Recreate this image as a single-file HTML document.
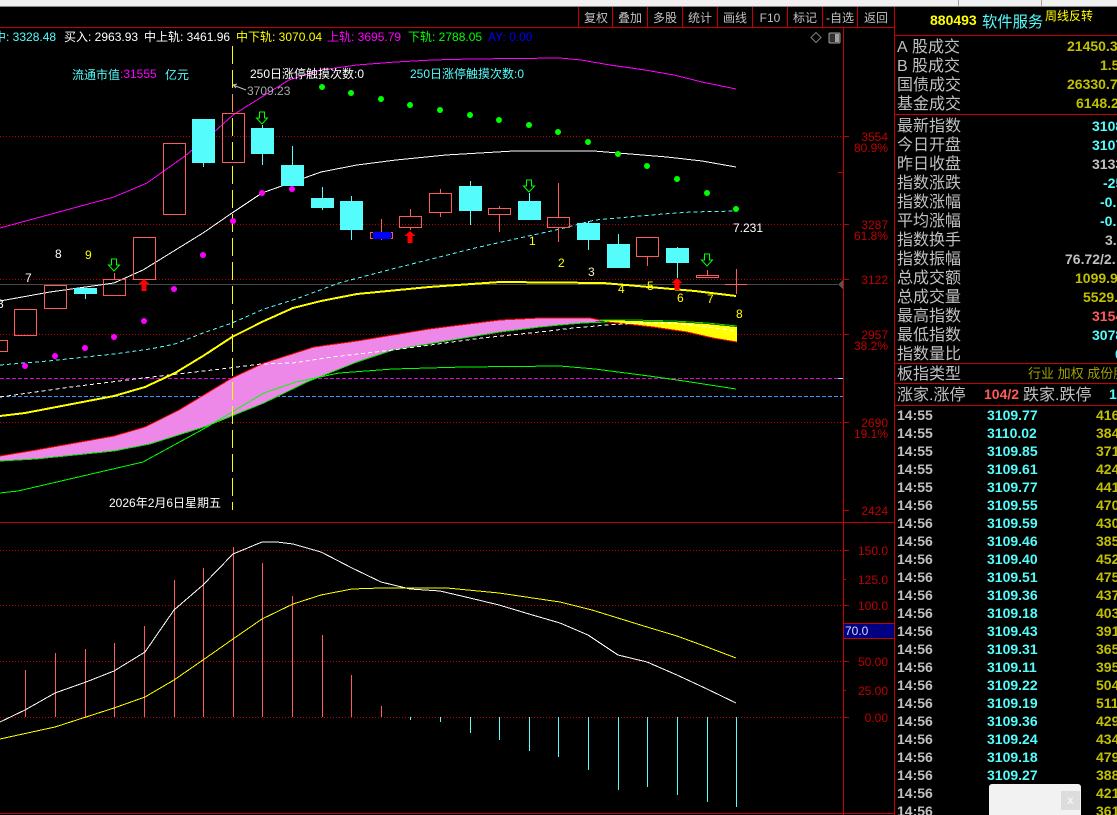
<!DOCTYPE html>
<html lang="zh-CN">
<head>
<meta charset="utf-8">
<title>880493 软件服务</title>
<style>
html,body{margin:0;padding:0;background:#000;width:1117px;height:815px;overflow:hidden}
svg{display:block;position:absolute;left:0;top:0}
text{font-family:"Liberation Sans","WenQuanYi Zen Hei","Noto Sans CJK SC",sans-serif;font-size:12px}
.ax text{fill:#c00000;text-anchor:end}
.lb text{fill:#c0c0c0;font-size:16px}
.v text{font-size:14px;font-weight:bold;fill:#c0c000}
.t text{font-size:14px;font-weight:bold}
.tb text{fill:#c0c0c0;text-anchor:middle}
.h{fill:none;stroke:#ff5a5a;stroke-width:1}
.k{fill:#54fcfc}
.w{stroke:#54fcfc;stroke-width:1}
.r{stroke:#ff5a5a;stroke-width:1}
</style>
</head>
<body>
<svg width="1117" height="815" viewBox="0 0 1117 815" xmlns="http://www.w3.org/2000/svg">
<defs>
<path id="da" d="M-2.5,-6 H2.5 V0 H5.5 L0,6 L-5.5,0 H-2.5 Z" fill="none" stroke="#00ff00" stroke-width="1"/>
<path id="ua" d="M0,-6 L5.5,-1 H2.5 V6 H-2.5 V-1 H-5.5 Z" fill="#ff0000"/>
</defs>
<rect width="1117" height="815" fill="#000"/>
<!-- top window strip -->
<rect width="1117" height="6" fill="#f0f0f0"/>
<rect y="6" width="1117" height="1" fill="#8a8a8a"/>
<rect x="958" width="1" height="6" fill="#a0a0a0"/>
<rect x="1041" width="1" height="6" fill="#a0a0a0"/>

<g shape-rendering="crispEdges">
<!-- frames -->
<path d="M0,27.5H894.5M578.5,7V27M612.5,7V27M647.5,7V27M682.5,7V27M717.5,7V27M752.5,7V27M787.5,7V27M822.5,7V27M857.5,7V27M843.5,27V815M894.5,7V815M0,522.5H894.5M0,813.5H894.5M895,35.5H1117M895,114.5H1117M895,363.5H1117M895,383.5H1117M895,405.5H1117" stroke="#c80000" stroke-width="1" fill="none"/>
<!-- dotted grid main -->
<g stroke="#c00000" stroke-width="1" stroke-dasharray="1 2" fill="none">
<path d="M0,136.5H843M0,224.5H843M0,279.5H843M0,334.5H843M0,422.5H843"/>
<path d="M0,550.5H843M0,605.5H843M0,661.5H843M0,717.5H843"/>
</g>
<path d="M843,136.5H849M843,224.5H849M843,279.5H849M843,334.5H849M843,422.5H849M843,510.5H849M838,172.5H843M843,550.5H849M843,579.5H846M843,605.5H849M843,661.5H849M843,690.5H846M843,717.5H849" stroke="#c00000" fill="none"/>
<path d="M0,284.5H838" stroke="#484848" fill="none"/>
<path d="M838,284.5L843,280V289Z" fill="#555"/>
<path d="M0,378.5H843" stroke="#e000e0" stroke-dasharray="4 2" fill="none"/>
<path d="M0,396.5H843" stroke="#3399ff" stroke-dasharray="4 2" fill="none"/>
<path d="M838,378.5H843" stroke="#54fcfc" fill="none"/>
</g>

<!-- band -->
<g shape-rendering="crispEdges">
<path d="M0,456 L36,450 L114,436 L145,427 L179,410 L232,378 L264,363 L314,347 L357,341 L429,329 L500,320 L540,318 L590,318 L603,321 L583,323 L560,325 L540,327 L500,332 L464,338 L393,350 L357,362 L307,382 L264,403 L207,426 L150,444 L114,451 L36,459 L0,461 Z" fill="#ee88e8"/>
<path d="M600,320 L633,321 L673,322 L707,324 L737,327 L737,342 L713,338 L687,332 L653,327 L627,324 L607,322 Z" fill="#ffff00"/>
<path d="M0,456 L36,450 L114,436 L145,427 L179,410 L232,378 L264,363 L314,347 L357,341 L429,329 L500,320 L540,318 L590,318 L600,320" fill="none" stroke="#ff0000" stroke-width="1"/>
<path d="M607,322 L627,324 L653,327 L687,332 L713,338 L737,342" fill="none" stroke="#ff0000" stroke-width="1"/>
<path d="M0,461 L36,459 L114,451 L150,444 L207,426 L264,403 L307,382 L357,362 L393,350 L464,338 L500,332 L540,327 L560,325 L583,323 L607,322" fill="none" stroke="#00e000" stroke-width="1"/>
<path d="M600,320 L633,320 L673,321 L707,323 L737,326" fill="none" stroke="#00e000" stroke-width="1"/>
</g>

<!-- moving lines -->
<g fill="none" shape-rendering="crispEdges">
<path d="M0,228 L114,197 L147,183 L185,156 L213,133 L233,115 L260,98 L289,80 L321,70 L357,65 L396,62 L432,60 L471,59 L560,58 L581,60 L610,65 L645,70 L674,75 L702,82 L736,89" stroke="#ff00ff"/>
<path d="M0,301 L50,292 L114,283 L143,270 L203,233 L232,213 L262,193 L293,182 L321,172 L357,165 L396,160 L446,155 L514,151 L594,151 L618,153 L667,157 L702,161 L736,167" stroke="#fff"/>
<path d="M0,365 L48,361 L114,354 L150,349 L175,344 L203,333 L232,323 L264,309 L296,299 L339,283 L396,268 L475,248 L560,229 L595,220 L663,214 L691,212 L736,211" stroke="#54fcfc" stroke-dasharray="4 3"/>
<path d="M0,397 L71,387 L143,378 L221,369 L261,364 L293,363 L332,357 L393,350 L482,338 L540,332 L573,328 L607,325 L640,323 L673,323 L707,327 L737,331" stroke="#fff" stroke-dasharray="4 3"/>
<path d="M0,416 L25,413 L114,396 L145,387 L175,373 L203,356 L232,337 L264,321 L293,308 L321,301 L357,294 L429,287 L500,282 L603,283 L649,287 L695,291 L736,296" stroke="#ffff00" stroke-width="2"/>
<path d="M0,493 L18,491 L143,462 L207,427 L232,412 L264,393 L296,382 L339,373 L393,369 L464,367 L560,366 L595,369 L649,376 L684,381 L736,389" stroke="#00ff00"/>
</g>

<!-- date marker -->
<g shape-rendering="crispEdges">
<path d="M232.5,46V510" stroke="#ffff00" stroke-dasharray="18 6" fill="none"/>
<path d="M232.5,94V112" stroke="#ff9040" fill="none"/>
</g>

<!-- candles -->
<g shape-rendering="crispEdges">
<path class="h" d="M-2,340.5H7.5V351.5H-2Z"/>
<rect class="h" x="14.5" y="309.5" width="22" height="26"/>
<rect class="h" x="44.5" y="285.5" width="22" height="23"/>
<path class="w" d="M85.5,294V299"/><rect class="k" x="74" y="288" width="23" height="6"/>
<rect class="h" x="103.5" y="279.5" width="22" height="16"/><path class="r" d="M114.5,273V279"/>
<rect class="h" x="133.5" y="237.5" width="22" height="42"/>
<rect class="h" x="163.5" y="143.5" width="22" height="71"/>
<path class="w" d="M203.5,163V167"/><rect class="k" x="192" y="119" width="23" height="44"/>
<rect class="h" x="222.5" y="113.5" width="22" height="49"/>
<path class="w" d="M262.5,125V165"/><rect class="k" x="251" y="128" width="23" height="26"/>
<path class="w" d="M292.5,146V186"/><rect class="k" x="281" y="165" width="23" height="21"/>
<path class="w" d="M322.5,187V210"/><rect class="k" x="311" y="198" width="23" height="10"/>
<path class="w" d="M351.5,196V240"/><rect class="k" x="340" y="201" width="23" height="29"/>
<path class="r" d="M381.5,219V240"/><rect class="h" x="370.5" y="232.5" width="22" height="6"/><rect x="373" y="232" width="18" height="7" fill="#0000ff"/>
<path class="r" d="M410.5,209V216M410.5,228V230"/><rect class="h" x="399.5" y="216.5" width="22" height="11"/>
<path class="r" d="M440.5,189V193M440.5,213V217"/><rect class="h" x="429.5" y="193.5" width="22" height="19"/>
<path class="w" d="M470.5,181V225"/><rect class="k" x="459" y="186" width="23" height="25"/>
<path class="r" d="M499.5,206V208M499.5,215V232"/><rect class="h" x="488.5" y="208.5" width="22" height="6"/>
<path class="w" d="M529.5,193V201"/><rect class="k" x="518" y="201" width="23" height="19"/>
<path class="r" d="M558.5,183V217M558.5,228V242"/><rect class="h" x="547.5" y="217.5" width="22" height="10"/>
<path class="w" d="M588.5,221V250"/><rect class="k" x="577" y="223" width="23" height="17"/>
<path class="w" d="M618.5,234V268"/><rect class="k" x="607" y="244" width="23" height="24"/>
<path class="r" d="M647.5,257V266"/><rect class="h" x="636.5" y="237.5" width="22" height="19"/>
<path class="w" d="M677.5,247V278"/><rect class="k" x="666" y="248" width="23" height="15"/>
<path class="r" d="M707.5,270V275"/><rect class="h" x="696.5" y="275.5" width="22" height="2"/>
<path class="r" d="M736.5,269V294M725,284.5H747"/>
</g>

<!-- dots -->
<g fill="#00ff00">
<circle cx="322" cy="87" r="3"/><circle cx="351" cy="93" r="3"/><circle cx="381" cy="99" r="3"/><circle cx="410" cy="105" r="3"/><circle cx="440" cy="110" r="3"/><circle cx="470" cy="115" r="3"/><circle cx="499" cy="120" r="3"/><circle cx="529" cy="125" r="3"/><circle cx="558" cy="132" r="3"/><circle cx="588" cy="142" r="3"/><circle cx="618" cy="154" r="3"/><circle cx="647" cy="166" r="3"/><circle cx="677" cy="179" r="3"/><circle cx="707" cy="193" r="3"/><circle cx="736" cy="209" r="3"/>
</g>
<g fill="#ff00ff">
<circle cx="25" cy="366" r="3"/><circle cx="55" cy="356" r="3"/><circle cx="85" cy="348" r="3"/><circle cx="114" cy="337" r="3"/><circle cx="144" cy="321" r="3"/><circle cx="174" cy="289" r="3"/><circle cx="203" cy="255" r="3"/><circle cx="233" cy="221" r="3"/><circle cx="262" cy="193" r="3"/><circle cx="292" cy="189" r="3"/>
</g>
<use href="#da" x="114" y="265"/><use href="#da" x="262" y="118"/><use href="#da" x="529" y="186"/><use href="#da" x="707" y="260"/>
<use href="#ua" x="144" y="285"/><use href="#ua" x="410" y="237"/><use href="#ua" x="677" y="284"/>

<!-- info row -->
<text y="41" x="-6" fill="#54fcfc">中: 3328.48</text>
<text y="41" x="64" fill="#fff">买入: 2963.93</text>
<text y="41" x="144" fill="#fff">中上轨: 3461.96</text>
<text y="41" x="236" fill="#ffff00">中下轨: 3070.04</text>
<text y="41" x="327" fill="#ff00ff">上轨: 3695.79</text>
<text y="41" x="408" fill="#00ff00">下轨: 2788.05</text>
<text y="41" x="488" fill="#0000ff">AY: 0.00</text>

<text x="72" y="79" fill="#54fcfc">流通市值</text><text x="120" y="78" fill="#ff00ff">:31555</text><text x="165" y="79" fill="#54fcfc">亿元</text>
<text x="250" y="78" fill="#fff">250日涨停触摸次数:0</text>
<text x="410" y="78" fill="#54fcfc">250日涨停触摸次数:0</text>
<path d="M233,85 L246,90 M233,85 L237,84 M233,85 L236,88" stroke="#c0c0c0" fill="none"/>
<text x="247" y="95" fill="#a8a8a8">3709.23</text>
<text x="109" y="507" fill="#fff">2026年2月6日星期五</text>

<!-- wave labels -->
<text x="55" y="258" fill="#fff">8</text><text x="85" y="259" fill="#ffff00">9</text><text x="25" y="282" fill="#fff">7</text><text x="-3" y="308" fill="#fff">8</text>
<g fill="#ffff00"><text x="529" y="245">1</text><text x="558" y="267">2</text><text x="618" y="293">4</text><text x="647" y="290">5</text><text x="677" y="302">6</text><text x="707" y="303">7</text><text x="736" y="318">8</text></g>
<text x="588" y="276" fill="#f0f0c0">3</text>
<text x="733" y="232" fill="#fff">7.231</text>

<!-- icons -->
<path d="M816,32.5L821,37.5L816,42.5L811,37.5Z" fill="none" stroke="#808080"/>
<rect x="829" y="33" width="11" height="10" rx="1" fill="#303030" stroke="#a0a0a0"/><rect x="835" y="34" width="4" height="8" fill="#a0a0a0"/>

<!-- toolbar -->
<g class="tb">
<text x="596" y="22">复权</text><text x="630" y="22">叠加</text><text x="665" y="22">多股</text><text x="700" y="22">统计</text><text x="735" y="22">画线</text><text x="770" y="22">F10</text><text x="805" y="22">标记</text><text x="840" y="22">-自选</text><text x="876" y="22">返回</text>
</g>

<!-- price axis -->
<g class="ax">
<text x="888" y="141">3554</text><text x="888" y="152">80.9%</text>
<text x="888" y="229">3287</text><text x="888" y="240">61.8%</text>
<text x="888" y="284">3122</text>
<text x="888" y="339">2957</text><text x="888" y="350">38.2%</text>
<text x="888" y="427">2690</text><text x="888" y="438">19.1%</text>
<text x="888" y="515">2424</text>
<text x="888" y="555">150.0</text><text x="888" y="584">125.0</text><text x="888" y="610">100.0</text><text x="888" y="666">50.00</text><text x="888" y="695">25.00</text><text x="888" y="722">0.00</text>
</g>

<!-- sub chart bars -->
<g shape-rendering="crispEdges" fill="none">
<path d="M25.5,670V717M55.5,653V717M85.5,649V717M114.5,643V717M144.5,626V717M174.5,580V717M203.5,568V717M233.5,547V717M262.5,563V717M292.5,596V717M322.5,635V717M351.5,675V717M381.5,706V717" stroke="#ff5a5a"/>
<path d="M410.5,717V720M440.5,717V722M470.5,717V733M499.5,717V740M529.5,717V751M558.5,717V757M588.5,717V770M618.5,717V790M647.5,717V787M677.5,717V795M707.5,717V802M736.5,717V807" stroke="#54fcfc"/>
<path d="M0,722 L25,710 L55,693 L86,682 L114,671 L145,652 L174,610 L203,585 L233,554 L262,542 L277,542 L293,544 L321,552 L352,568 L381,582 L410,589 L440,591 L470,598 L499,605 L529,614 L560,623 L588,635 L618,655 L647,662 L677,675 L707,689 L736,703" stroke="#fff"/>
<path d="M0,739 L55,727 L86,717 L114,708 L145,697 L174,680 L203,660 L233,639 L262,619 L293,604 L321,595 L352,589 L381,588 L425,588 L447,588 L499,593 L560,602 L592,610 L647,627 L677,636 L707,647 L736,658" stroke="#ffff00"/>
<rect x="844" y="623" width="50" height="16" fill="#000080"/>
<path d="M844,623.5H894M844,638.5H894" stroke="#c80000"/>
</g>
<text x="845" y="635" fill="#d8d8ff">70.0</text>

<!-- right panel head -->
<text x="930" y="25" font-weight="bold" style="font-size:14px" fill="#ffff00">880493</text>
<text x="982" y="27" style="font-size:15.3px" fill="#54fcfc">软件服务</text>
<text x="1045" y="20" fill="#ffff00">周线反转</text>

<g class="lb">
<text x="897" y="52">A</text><text x="912" y="52">股成交</text>
<text x="897" y="71">B</text><text x="912" y="71">股成交</text>
<text x="897" y="90">国债成交</text>
<text x="897" y="109">基金成交</text>
<text x="897" y="131">最新指数</text>
<text x="897" y="150">今日开盘</text>
<text x="897" y="169">昨日收盘</text>
<text x="897" y="188">指数涨跌</text>
<text x="897" y="207">指数涨幅</text>
<text x="897" y="226">平均涨幅</text>
<text x="897" y="245">指数换手</text>
<text x="897" y="264">指数振幅</text>
<text x="897" y="283">总成交额</text>
<text x="897" y="302">总成交量</text>
<text x="897" y="321">最高指数</text>
<text x="897" y="340">最低指数</text>
<text x="897" y="359">指数量比</text>
<text x="897" y="379">板指类型</text>
<text x="897" y="400">涨家.涨停</text>
<text x="1023" y="400">跌家.跌停</text>
</g>

<g class="v">
<text x="1067" y="51">21450.3</text>
<text x="1100" y="70">1.5</text>
<text x="1067" y="89">26330.7</text>
<text x="1076" y="108">6148.2</text>
<text x="1092" y="131" style="fill:#54fcfc">3108</text>
<text x="1092" y="150" style="fill:#54fcfc">3107</text>
<text x="1092" y="169" style="fill:#c0c0c0">3133</text>
<text x="1103" y="188" style="fill:#54fcfc">-25</text>
<text x="1100" y="207" style="fill:#54fcfc">-0.</text>
<text x="1100" y="226" style="fill:#54fcfc">-0.</text>
<text x="1105" y="245" style="fill:#c0c0c0">3.</text>
<text x="1065" y="264" style="fill:#c0c0c0">76.72/2.</text>
<text x="1075" y="283">1099.9</text>
<text x="1083" y="302">5529.</text>
<text x="1092" y="321" style="fill:#ff5a5a">3154</text>
<text x="1092" y="340" style="fill:#54fcfc">3078</text>
<text x="1115" y="359" style="fill:#54fcfc">0</text>
<text x="984" y="399" style="fill:#ff5a5a">104/2</text>
<text x="1109" y="399" style="fill:#54fcfc">1</text>
</g>
<text x="1028" y="378" style="font-size:13px" fill="#a0a000">行业 加权 成份股</text>

<!-- tick list -->
<g class="t">
<g fill="#c0c0c0">
<text x="897" y="420">14:55</text><text x="897" y="438">14:55</text><text x="897" y="456">14:55</text><text x="897" y="474">14:55</text><text x="897" y="492">14:55</text><text x="897" y="510">14:56</text><text x="897" y="528">14:56</text><text x="897" y="546">14:56</text><text x="897" y="564">14:56</text><text x="897" y="582">14:56</text><text x="897" y="600">14:56</text><text x="897" y="618">14:56</text><text x="897" y="636">14:56</text><text x="897" y="654">14:56</text><text x="897" y="672">14:56</text><text x="897" y="690">14:56</text><text x="897" y="708">14:56</text><text x="897" y="726">14:56</text><text x="897" y="744">14:56</text><text x="897" y="762">14:56</text><text x="897" y="780">14:56</text><text x="897" y="798">14:56</text><text x="897" y="816">14:56</text>
</g>
<g fill="#54fcfc">
<text x="987" y="420">3109.77</text><text x="987" y="438">3110.02</text><text x="987" y="456">3109.85</text><text x="987" y="474">3109.61</text><text x="987" y="492">3109.77</text><text x="987" y="510">3109.55</text><text x="987" y="528">3109.59</text><text x="987" y="546">3109.46</text><text x="987" y="564">3109.40</text><text x="987" y="582">3109.51</text><text x="987" y="600">3109.36</text><text x="987" y="618">3109.18</text><text x="987" y="636">3109.43</text><text x="987" y="654">3109.31</text><text x="987" y="672">3109.11</text><text x="987" y="690">3109.22</text><text x="987" y="708">3109.19</text><text x="987" y="726">3109.36</text><text x="987" y="744">3109.24</text><text x="987" y="762">3109.18</text><text x="987" y="780">3109.27</text>
</g>
<g fill="#c0c000">
<text x="1096" y="420">416</text><text x="1096" y="438">384</text><text x="1096" y="456">371</text><text x="1096" y="474">424</text><text x="1096" y="492">441</text><text x="1096" y="510">470</text><text x="1096" y="528">430</text><text x="1096" y="546">385</text><text x="1096" y="564">452</text><text x="1096" y="582">475</text><text x="1096" y="600">437</text><text x="1096" y="618">403</text><text x="1096" y="636">391</text><text x="1096" y="654">365</text><text x="1096" y="672">395</text><text x="1096" y="690">504</text><text x="1096" y="708">511</text><text x="1096" y="726">429</text><text x="1096" y="744">434</text><text x="1096" y="762">479</text><text x="1096" y="780">388</text><text x="1096" y="798">421</text><text x="1096" y="816">361</text>
</g>
</g>

<!-- popup -->
<rect x="989" y="784" width="92" height="40" rx="3" fill="#f2f2f2"/>
<rect x="1061" y="791" width="19" height="19" fill="#dcdcdc"/>
<text x="1067" y="804" fill="#f4f4f4" font-weight="bold">x</text>
</svg>
</body>
</html>
